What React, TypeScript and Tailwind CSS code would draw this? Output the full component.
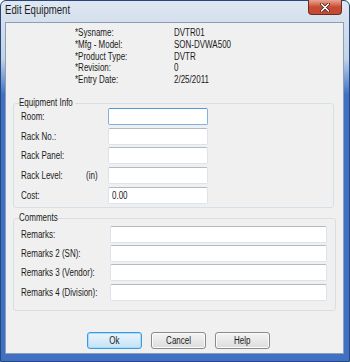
import React from "react";

const font = {
  fontFamily: '"Liberation Sans", Arial, sans-serif',
};

function T({ children, center }: { children: React.ReactNode; center?: boolean }) {
  return (
    <span
      className={`inline-block whitespace-nowrap scale-x-[0.8] ${center ? "origin-center" : "origin-left"}`}
    >
      {children}
    </span>
  );
}

function Input({ w, value, focus }: { w: string; value?: string; focus?: boolean }) {
  return (
    <div
      className={`${w} h-[17px] bg-white border rounded-[2px] flex items-center pl-[3px] text-[10px] text-[#1a1a1a] ${
        focus
          ? "border-[#7fb2e4] border-t-[#5a95d6]"
          : "border-[#dde3ea] border-t-[#b5b9c0]"
      }`}
    >
      {value ? <T>{value}</T> : null}
    </div>
  );
}

function Btn({ label, def }: { label: string; def?: boolean }) {
  return (
    <div
      className={`w-[55px] h-[17px] rounded-[3px] border flex items-center justify-center text-[10px] text-[#1a1a1a] ${
        def
          ? "border-[#3c9ae0] bg-gradient-to-b from-[#eaf6fd] to-[#c4e2f5] shadow-[inset_0_0_0_1px_#a8dbf7]"
          : "border-[#8a8a8a] bg-gradient-to-b from-[#f4f4f4] to-[#dcdcdc] shadow-[inset_0_0_0_1px_#fbfbfb]"
      }`}
    >
      <T center>{label}</T>
    </div>
  );
}

export default function App() {
  const info = [
    ["*Sysname:", "DVTR01"],
    ["*Mfg - Model:", "SON-DVWA500"],
    ["*Product Type:", "DVTR"],
    ["*Revision:", "0"],
    ["*Entry Date:", "2/25/2011"],
  ];
  const equip = ["Room:", "Rack No.:", "Rack Panel:", "Rack Level:", "Cost:"];
  const remarks = ["Remarks:", "Remarks 2 (SN):", "Remarks 3 (Vendor):", "Remarks 4 (Division):"];
  return (
    <div style={font} className="w-[350px] h-[362px] relative overflow-hidden">
      <div className="absolute inset-0 rounded-t-[6px] border border-[#27477a] bg-gradient-to-b from-[#dfe7f1] via-[#c3d3e8] via-[16%] to-[#3f70c4] to-[26%]" />
      {/* title */}
      <div className="absolute left-[5px] top-[3px] text-[12px] text-[#1e1e1e] leading-[14px]">
        <T>Edit Equipment</T>
      </div>
      {/* close button */}
      <div className="absolute left-[308px] top-0 w-[34px] h-[15px] rounded-b-[4px] border border-t-0 border-[#6b2a22] bg-gradient-to-b from-[#e8a493] via-[#c94a32] via-[50%] to-[#c24a36] flex items-center justify-center">
        <svg width="10" height="9" viewBox="0 0 10 9">
          <path d="M1.5 1 L8.5 8 M8.5 1 L1.5 8" stroke="#3b1a14" strokeWidth="3" strokeLinecap="round" />
          <path d="M1.5 1 L8.5 8 M8.5 1 L1.5 8" stroke="#ffffff" strokeWidth="1.6" strokeLinecap="round" />
        </svg>
      </div>
      {/* client area */}
      <div className="absolute left-[5px] top-[22px] w-[339px] h-[332px] bg-[#f0f0f0] border border-[#8d9fb6] flex flex-col">
        <div className="pt-[4px] pl-[69px] flex flex-col text-[10px] text-[#1a1a1a] leading-[11.75px]">
          {info.map(([l, v]) => (
            <div key={l} className="flex">
              <div className="w-[99px]">
                <T>{l}</T>
              </div>
              <div>
                <T>{v}</T>
              </div>
            </div>
          ))}
        </div>
        {/* Equipment group */}
        <div className="relative ml-[7px] mt-[17px] w-[321px] h-[105px] border border-[#d5dfe5] rounded-[3px]">
          <div className="absolute left-[5px] -top-[7px] w-[56px] bg-[#f0f0f0] text-[10px] leading-[12px] text-[#1a1a1a]">
            <T>Equipment Info</T>
          </div>
          <div className="pt-[4px] pl-[7px] flex flex-col gap-[2.75px]">
            {equip.map((l, i) => (
              <div key={l} className="flex items-center h-[17px]">
                <div className="w-[65px] text-[10px] text-[#1a1a1a]">
                  <T>{l}</T>
                </div>
                <div className="w-[22px] text-[10px] text-[#1a1a1a]">
                  {l === "Rack Level:" ? <T>(in)</T> : null}
                </div>
                <Input w="w-[100px]" focus={i === 0} value={l === "Cost:" ? "0.00" : undefined} />
              </div>
            ))}
          </div>
        </div>
        {/* Comments group */}
        <div className="relative ml-[7px] mt-[10px] w-[323px] h-[93px] border border-[#d5dfe5] rounded-[3px]">
          <div className="absolute left-[5px] -top-[7px] w-[38px] bg-[#f0f0f0] text-[10px] leading-[12px] text-[#1a1a1a]">
            <T>Comments</T>
          </div>
          <div className="pt-[7px] pl-[7px] flex flex-col gap-[2.3px]">
            {remarks.map((l) => (
              <div key={l} className="flex items-center h-[17px]">
                <div className="w-[89px] text-[10px] text-[#1a1a1a]">
                  <T>{l}</T>
                </div>
                <Input w="w-[217px]" />
              </div>
            ))}
          </div>
        </div>
        <div className="mt-[21px] pl-[81px] flex gap-[9px]">
          <Btn label="Ok" def />
          <Btn label="Cancel" />
          <Btn label="Help" />
        </div>
      </div>
    </div>
  );
}
